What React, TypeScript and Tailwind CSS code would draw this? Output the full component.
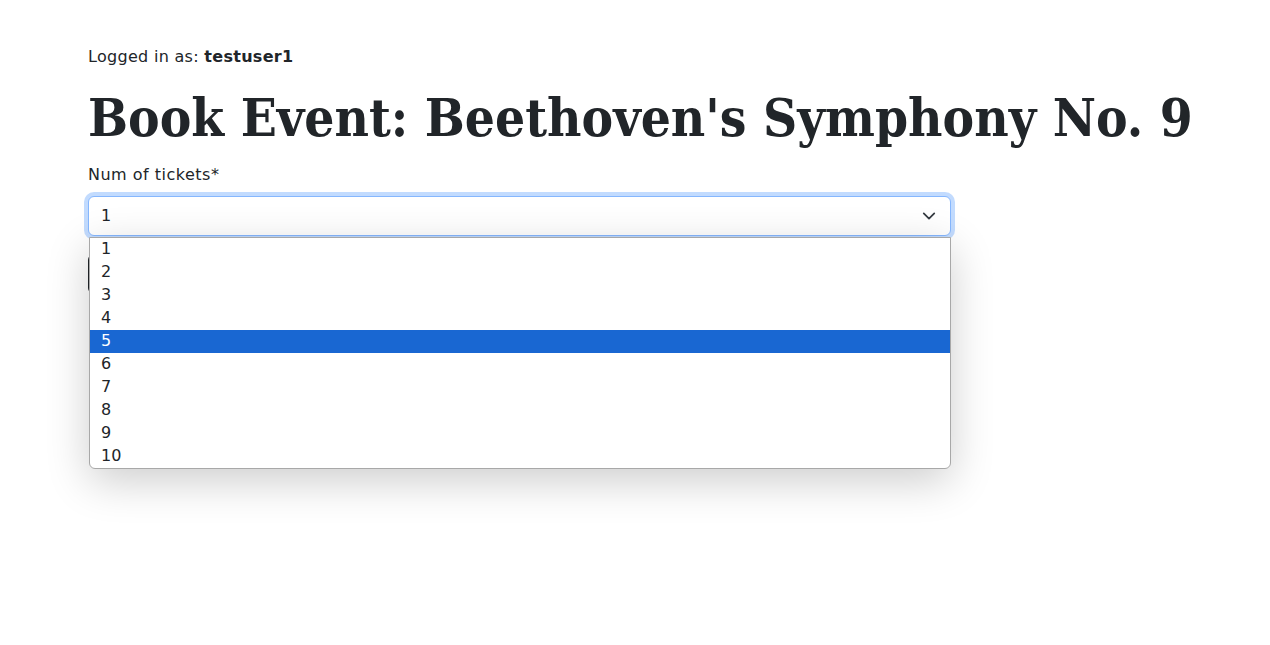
import React from "react";

export default function App() {
  const opts = [1, 2, 3, 4, 5, 6, 7, 8, 9, 10];
  return (
    <div className="min-h-[645px] bg-white text-[#212529]" style={{ fontFamily: '"DejaVu Sans", sans-serif' }}>
      <div className="pl-[88px] pr-[40px] pt-[46px]">
        <div className="text-[16px] leading-[22px] tracking-[0.3px]">
          Logged in as: <span className="font-bold">testuser1</span>
        </div>
        <h1
          className="mt-[12px] text-[52.7px] font-bold leading-[76px] whitespace-nowrap"
          style={{ fontFamily: '"DejaVu Serif Condensed", "DejaVu Serif", serif' }}
        >
          Book Event: Beethoven's Symphony No. 9
        </h1>
        <div className="mt-[8px] text-[16px] leading-[22px] tracking-[0.5px]">Num of tickets*</div>
        <div className="relative mt-[10px] w-[863px]">
          <div className="flex h-[40px] items-center justify-between rounded-[6px] border border-[#86b7fe] bg-white pl-[12px] pr-[14px] text-[16px] shadow-[0_0_0_4px_rgba(13,110,253,0.25)]">
            <span>1</span>
            <svg width="14" height="14" viewBox="0 0 16 16" fill="none">
              <path d="M2 5l6 6 6-6" stroke="#343a40" strokeWidth="2" strokeLinecap="round" strokeLinejoin="round" />
            </svg>
          </div>
          <div className="mt-[18px] h-[40px] w-[120px] rounded-[6px] bg-[#212529]" />
          <div className="absolute left-[1px] top-[41px] w-[862px] overflow-hidden rounded-b-[6px] border border-[#a8a8a8] bg-white shadow-[0_12px_44px_rgba(0,0,0,0.2)]">
            {opts.map((o) => (
              <div
                key={o}
                className={
                  "h-[23px] pl-[11px] text-[16px] leading-[21px] " +
                  (o === 5 ? "bg-[#1967d2] text-white" : "text-[#212529]")
                }
              >
                {o}
              </div>
            ))}
          </div>
        </div>
      </div>
    </div>
  );
}
